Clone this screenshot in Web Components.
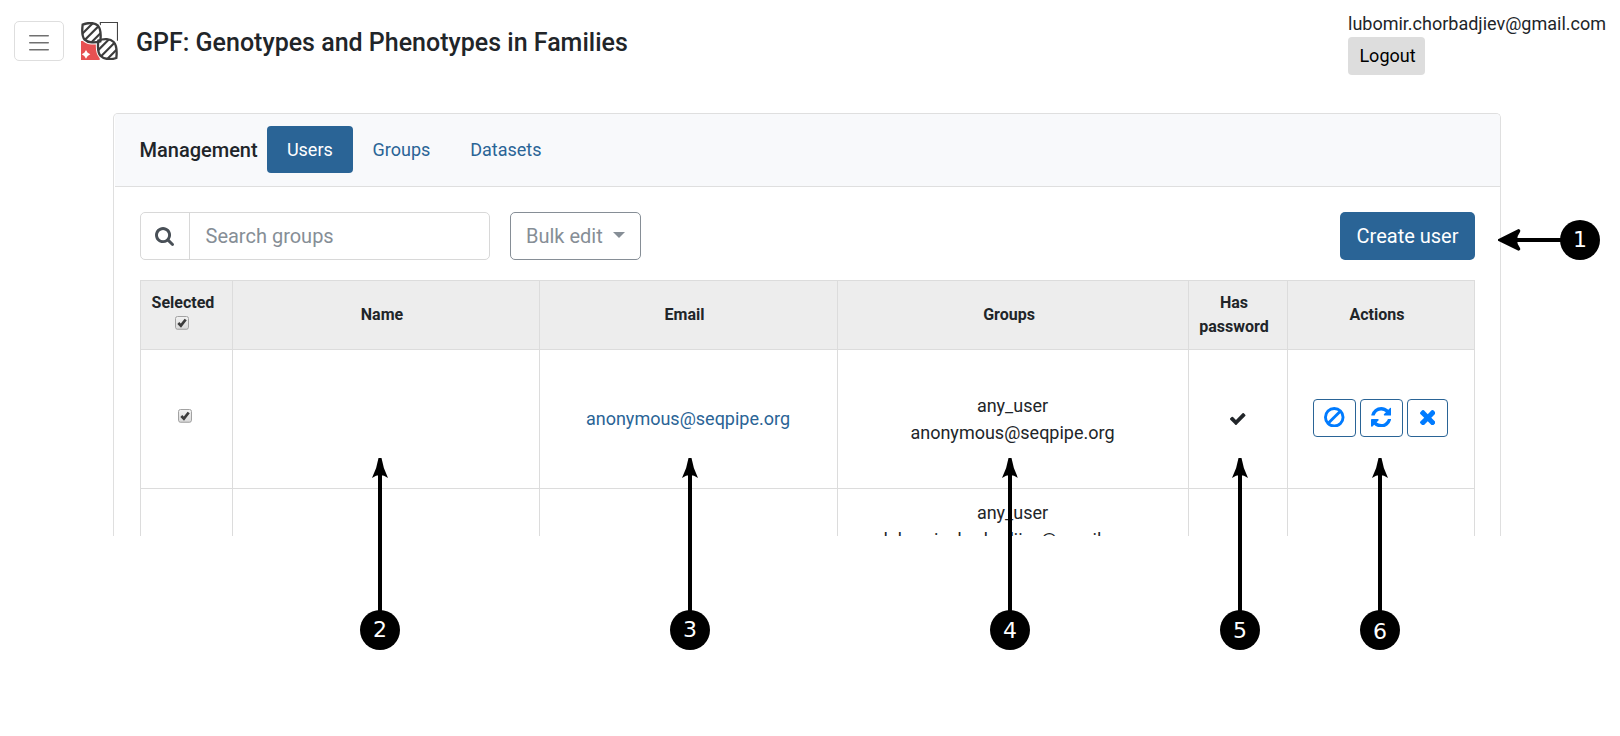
<!DOCTYPE html>
<html lang="en">
<head>
<meta charset="utf-8">
<title>GPF: Genotypes and Phenotypes in Families</title>
<style>
html,body{margin:0;background:#fff}
body{width:1620px;height:736px;overflow:hidden;position:relative;font-family:Roboto,sans-serif;font-size:18px;line-height:27px;color:#212529}
</style>
</head>
<body>
<gpf-app></gpf-app>
<script>
const define = (name, html, setup) => customElements.define(name, class extends HTMLElement {
  connectedCallback() {
    if (this.shadowRoot) return;
    const t = document.createElement('template');
    t.innerHTML = html;
    this.attachShadow({mode: 'open'}).append(t.content.cloneNode(true));
    if (setup) setup(this, this.shadowRoot);
  }
});

const ICONS = {
  search: ['0 0 1664 1664', '<path d="M1152 704q0-185-131.5-316.5t-316.5-131.5-316.5 131.5-131.5 316.5 131.5 316.5 316.5 131.5 316.5-131.5 131.5-316.5zm512 832q0 52-38 90t-90 38q-54 0-90-38l-343-342q-179 124-399 124-143 0-273.5-55.5t-225-150-150-225-55.5-273.5 55.5-273.5 150-225 225-150 273.5-55.5 273.5 55.5 225 150 150 225 55.5 273.5q0 220-124 399l343 343q37 37 37 90z"/>'],
  check: ['121 334 1550 1188', '<path d="M1671 566q0 40-28 68l-724 724-136 136q-28 28-68 28t-68-28l-136-136-362-362q-28-28-28-68t28-68l136-136q28-28 68-28t68 28l294 295 656-657q28-28 68-28t68 28l136 136q28 28 28 68z"/>'],
  times: ['302 366 1188 1188', '<path d="M1490 1322q0 40-28 68l-136 136q-28 28-68 28t-68-28l-294-294-294 294q-28 28-68 28t-68-28l-136-136q-28-28-28-68t28-68l294-294-294-294q-28-28-28-68t28-68l136-136q28-28 68-28t68 28l294 294 294-294q28-28 68-28t68 28l136 136q28 28 28 68t-28 68l-294 294 294 294q28 28 28 68z"/>'],
  refresh: ['128 128 1536 1536', '<path d="M1639 1056q0 5-1 7-64 268-268 434.5t-478 166.5q-146 0-282.5-55t-243.5-157l-129 129q-19 19-45 19t-45-19-19-45v-448q0-26 19-45t45-19h448q26 0 45 19t19 45-19 45l-137 137q71 66 161 102t187 36q134 0 250-65t186-179q11-17 53-117 8-23 30-23h192q13 0 22.5 9.5t9.5 22.5zm25-800v448q0 26-19 45t-45 19h-448q-26 0-45-19t-19-45 19-45l138-138q-148-137-349-137-134 0-250 65t-186 179q-11 17-53 117-8 23-30 23h-199q-13 0-22.5-9.5t-9.5-22.5v-7q65-268 270-434.5t480-166.5q146 0 284 55.5t245 156.5l130-129q19-19 45-19t45 19 19 45z"/>'],
  ban: ['0 0 20.5 20.5', '<g fill="none" stroke="currentColor" stroke-width="2.9"><circle cx="10.25" cy="10.25" r="8.8"/><path d="M4.2 16.3L16.3 4.2"/></g>'],
  menu: ['0 0 20 17', '<path d="M.7 1.7H19.3M.7 8.7H19.3M.7 15.7H19.3" stroke="#707070" stroke-width="1.4" stroke-linecap="round"/>'],
  caret: ['0 0 12 6', '<path d="M0 0H12L6 6z"/>']
};
define('gpf-icon', '<style>:host{display:block;flex:none}svg{display:block;width:100%;height:100%;fill:currentColor}</style><svg></svg>', (el, root) => {
  const [vb, body] = ICONS[el.getAttribute('name')];
  const s = root.querySelector('svg');
  s.setAttribute('viewBox', vb);
  s.innerHTML = body;
});

define('gpf-logo', `<style>:host{display:block;width:37px;height:38px}svg{display:block}</style>
<svg width="37" height="38" viewBox="243 66 111 114">
<path d="M243 123H299V180H243z" fill="#e75152"/>
<path d="M301 76V67.5H352.500V122" fill="none" stroke="#444" stroke-width="3.500"/>
<path d="M258 150L263 158L271 163L263 168L258 176L253 168L245 163L253 158z" fill="#fff"/>
<defs>
<path id="p" d="M248 74C264 67 284 67 294 77C304 88 303 106 301 124C285 129 264 129 254 119C244 108 246 90 248 74z"/>
<path id="q" d="M295 122C312 115 331 116 341 126C351 136 351 155 349 174C332 180 312 178 302 168C292 157 293 139 295 122z"/>
<clipPath id="a"><use href="#p"/></clipPath><clipPath id="b"><use href="#q"/></clipPath></defs>
<g fill="#fff" stroke="#fff" stroke-width="13"><use href="#p"/><use href="#q"/></g>
<g fill="none" stroke="#3d3d3d" stroke-width="7">
<g clip-path="url(#a)"><path stroke-width="6.500" d="M243 105L283 65M252 122L302 72M273 128L308 93"/></g>
<g clip-path="url(#b)"><path stroke-width="6.500" d="M290 155L330 115M301 171L351 121M321 178L356 143"/></g>
<use href="#p"/><use href="#q"/>
</g></svg>`);

define('gpf-header', `<style>
:host{display:flex;height:113px;align-items:flex-start}
.menu{box-sizing:border-box;margin:21px 0 0 14px;width:50px;height:40px;border:1px solid #dedede;border-radius:5px;display:grid;place-items:center;background:#fff;padding:2px 1px 0 0}
.menu gpf-icon{width:20px;height:17px}
gpf-logo{margin:22px 0 0 17px}
h1{margin:28px 0 0 18px;font-size:25px;line-height:30px;font-weight:500;white-space:nowrap}
.user{margin:10px 0 0 auto;width:272px}
.user button{display:block;border:0;border-radius:4px;background:#ddd;color:#000;font:18px/38px Roboto,sans-serif;width:77px;height:38px;padding:0 0 0 2px;text-align:center}
</style><button class="menu" aria-label="Menu"><gpf-icon name="menu"></gpf-icon></button><gpf-logo></gpf-logo><h1>GPF: Genotypes and Phenotypes in Families</h1>
<div class="user">lubomir.chorbadjiev@gmail.com<button>Logout</button></div>`);

define('gpf-tabs', `<style>
:host{display:flex;box-sizing:border-box;height:73px;margin-left:1px;padding:12px 0 0 24.500px;background:#f8f9fb;border-bottom:1px solid #dfdfdf}
b{font-weight:500;font-size:20px;line-height:48px;width:127.500px}
a{height:47px;line-height:47px;color:#2a6496;padding:0 19.900px;border-radius:4px}
a.on{background:#2a6496;color:#fff}
</style><b>Management</b><a class="on">Users</a><a>Groups</a><a>Datasets</a>`);

define('gpf-toolbar', `<style>
:host{display:flex;height:48px;margin:25px 25px 0 26px;font-size:20px}
.search,.bulk,.create{box-sizing:border-box;height:48px;border-radius:5px;line-height:46px}
.search{width:350px;border:1px solid #d8d8d8;display:flex;color:#868e96}
.glass{box-sizing:border-box;width:49px;border-right:1px solid #d8d8d8;display:grid;place-items:center;color:#495057;padding-right:1px}
.glass gpf-icon{width:19px;height:19px}
.search span{padding-left:15.500px}
.bulk{margin-left:20px;width:131px;border:1px solid #868e96;color:#868e96;display:flex;align-items:center;padding-left:15px;gap:10px}
.bulk gpf-icon{width:12px;height:6px;margin-top:-2px}
.create{margin-left:auto;width:135px;background:#2a6496;color:#fff;text-align:center;line-height:48px}
</style><div class="search"><div class="glass"><gpf-icon name="search"></gpf-icon></div><span>Search groups</span></div>
<div class="bulk">Bulk edit<gpf-icon name="caret"></gpf-icon></div><div class="create">Create user</div>`);

define('gpf-checkbox', `<style>:host{display:block;width:14px;height:14px}svg{display:block}</style>
<svg width="14" height="15"><defs><linearGradient id="g" x2="0" y2="1"><stop stop-color="#f2f2f2"/><stop offset="1" stop-color="#d9d9d9"/></linearGradient></defs>
<rect x="1" y="1.500" width="12" height="12.500" rx="2" fill="#000" opacity=".12"/><rect x=".5" y=".5" width="13" height="12.700" rx="2" fill="url(#g)" stroke="#a2a2a2"/><path d="M3.300 7L5.900 9.600L10.700 3.500" fill="none" stroke="#3c3c3c" stroke-width="2.700"/></svg>`);

define('gpf-action', `<style>:host{display:grid;place-items:center;box-sizing:border-box;width:43px;height:38px;border:1px solid #2a6496;border-radius:4px;color:#007bff}</style><slot></slot>`);

define('gpf-table', `<style>
:host{display:grid;grid-template-columns:92px 307px 298px 351px 99px 188px;grid-template-rows:69px 139px 120px;margin:20px 25px 0 26px;border-top:1px solid #dcdcdc;text-align:center}
:host>div{box-sizing:border-box;border-left:1px solid #dcdcdc;border-bottom:1px solid #dcdcdc;display:flex;flex-direction:column;align-items:center;justify-content:center}
:host>.e{border-right:1px solid #dcdcdc}
:host>.h{background:#ededed;font-size:16px;line-height:24px;font-weight:700}
:host>.sel{justify-content:flex-start;padding:10px 7px 0 0}
.sel gpf-checkbox{margin:1px 2px 0 0}
:host>.h.wide{padding-right:8px}
:host>.h.name{padding-right:8px}
:host>.h.pw{padding-right:8px}
a{color:#2a6496}
:host>.mail{padding:0 1px 2px 0}
:host>.grp{padding-right:1px}
:host>.top{justify-content:flex-start;padding:10px 1px 0 0}
:host>.act{flex-direction:row;gap:4px;padding:0 2px 3px 0}
.act .x{width:41px}
.ban,.ref{width:20.500px;height:20.500px;margin-top:-1px}
.ban{margin-left:1px}
.tim{width:15.500px;height:15.500px;margin-left:1px}
.ok{width:15.500px;height:12px}
</style>
<div class="h sel">Selected<gpf-checkbox></gpf-checkbox></div><div class="h name">Name</div><div class="h wide">Email</div><div class="h wide">Groups</div><div class="h pw">Has<br>password</div><div class="h e wide">Actions</div>
<div style="padding:0 3px 7px 0"><gpf-checkbox></gpf-checkbox></div><div></div><div class="mail"><a>anonymous@seqpipe.org</a></div><div class="grp"><span>any_user</span><span>anonymous@seqpipe.org</span></div><div><gpf-icon class="ok" name="check"></gpf-icon></div>
<div class="e act"><gpf-action><gpf-icon class="ban" name="ban"></gpf-icon></gpf-action><gpf-action><gpf-icon class="ref" name="refresh"></gpf-icon></gpf-action><gpf-action class="x"><gpf-icon class="tim" name="times"></gpf-icon></gpf-action></div>
<div></div><div></div><div></div><div class="top"><span>any_user</span><span>lubomir.chorbadjiev@gmail.com</span></div><div></div><div class="e"></div>`);

define('gpf-card', `<style>:host{display:block;box-sizing:border-box;width:1388px;height:423px;margin-left:113px;overflow:hidden;border:1px solid #dfdfdf;border-bottom:0;border-radius:5px 5px 0 0}</style><slot></slot>`);

/* Numbered marker with an arrow, placed freely over the page. */
define('gpf-callout', `<style>:host{position:absolute;left:0;top:0;width:1620px;height:736px;pointer-events:none}svg{display:block}</style>
<svg width="1620" height="736"><path class="line" stroke="#000" stroke-width="4"/><path class="head"/><circle r="20"/><text fill="#fff" font-family="DejaVu Sans, sans-serif" font-size="22" text-anchor="middle"></text></svg>`, (el, root) => {
  const x = +el.getAttribute('x'), y = +el.getAttribute('y'), side = el.hasAttribute('side');
  const $ = s => root.querySelector(s);
  $('.line').setAttribute('d', side ? `M${x} ${y}H1515` : `M${x} ${y}V470`);
  $('.head').setAttribute('d', side
    ? 'M1498 239.200L1518.500 229Q1521 229.500 1520 232Q1514 240 1520 248Q1521 250 1518.500 250.800L1498 240.800z'
    : `M${x - 1.500} 458H${x + 1.500}Q${x + 3} 468 ${x + 8} 478Q${x} 472 ${x - 8} 478Q${x - 3} 468 ${x - 1.500} 458z`);
  $('circle').setAttribute('cx', x);
  $('circle').setAttribute('cy', y);
  const t = $('text');
  t.setAttribute('x', x);
  t.setAttribute('y', y + +(el.getAttribute('dy') || 7.500));
  t.textContent = el.getAttribute('n');
});

define('gpf-app', `<style>:host{display:block}</style>
<gpf-header></gpf-header>
<gpf-card><gpf-tabs></gpf-tabs><gpf-toolbar></gpf-toolbar><gpf-table></gpf-table></gpf-card>
<gpf-callout n="1" x="1580" y="240" side dy="7"></gpf-callout>
<gpf-callout n="2" x="380" y="630" dy="7"></gpf-callout>
<gpf-callout n="3" x="690" y="630" dy="7"></gpf-callout>
<gpf-callout n="4" x="1010" y="630"></gpf-callout>
<gpf-callout n="5" x="1240" y="630"></gpf-callout>
<gpf-callout n="6" x="1380" y="630" dy="8.5"></gpf-callout>`);
</script>
</body>
</html>
